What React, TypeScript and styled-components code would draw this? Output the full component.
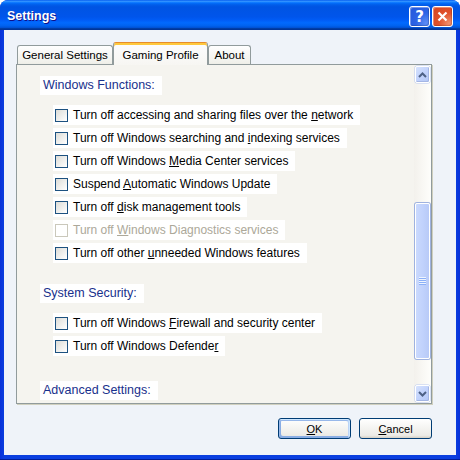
import styled, { createGlobalStyle } from "styled-components";

const GlobalStyle = createGlobalStyle`
  html, body {
    margin: 0;
    padding: 0;
    background: #ffffff;
  }
  body {
    width: 460px;
    height: 460px;
    overflow: hidden;
  }
`;

const Window = styled.div`
  width: 460px;
  height: 460px;
  display: flex;
  flex-direction: column;
  border-radius: 8px 8px 0 0;
  overflow: hidden;
  background: linear-gradient(90deg, #0831d9 0%, #0a3fe0 1%, #0a3fe0 99%, #0831d9 100%);
  box-shadow: inset 0 -1px #001e9a;
  font-family: "Liberation Sans", Arial, sans-serif;
`;

const TitleBar = styled.div`
  height: 30px;
  flex: none;
  display: flex;
  align-items: center;
  padding: 0 7px;
  background: linear-gradient(
    180deg,
    #0058ee 0%,
    #3593ff 4%,
    #288eff 6%,
    #127dff 8%,
    #036ffc 10%,
    #0262ee 14%,
    #0057e5 20%,
    #0054e3 24%,
    #0055eb 56%,
    #005bf5 66%,
    #026afe 76%,
    #0062ef 86%,
    #0052d6 92%,
    #0040ab 94%,
    #003092 100%
  );
`;

const Title = styled.div`
  flex: 1;
  color: #ffffff;
  font-weight: bold;
  font-size: 12.5px;
  text-shadow: 1px 1px #0f1089;
  padding-top: 1px;
`;

const Controls = styled.div`
  display: flex;
  gap: 2px;
  align-self: flex-end;
  margin-bottom: 3px;
`;

const CaptionButton = styled.div<{ $kind: "help" | "close" }>`
  width: 21px;
  height: 21px;
  box-sizing: border-box;
  border: 1px solid #ffffff;
  border-radius: 3px;
  display: flex;
  align-items: center;
  justify-content: center;
  color: #ffffff;
  font-family: "DejaVu Sans", sans-serif;
  font-weight: bold;
  font-size: 15px;
  background: ${(p) =>
    p.$kind === "help"
      ? "radial-gradient(circle at 85% 85%, #5d8df5 0%, #2c64e5 45%, #2457d9 100%)"
      : "radial-gradient(circle at 85% 85%, #f0906c 0%, #e0512b 45%, #d34522 100%)"};
  box-shadow: inset -1px -1px rgba(0, 0, 0, 0.15), inset 1px 1px rgba(255, 255, 255, 0.35);
`;

const Client = styled.div`
  flex: 1;
  margin: 0 4px 5px;
  background: #eff3f9;
  display: flex;
  flex-direction: column;
  padding: 12px 24px 0 12px;
`;

const TabRow = styled.div`
  height: 23px;
  display: flex;
  align-items: flex-end;
  margin: 0 0 -1px 1px;
  position: relative;
  z-index: 1;
`;

const Tab = styled.div<{ $active?: boolean; $width: number }>`
  width: ${(p) => p.$width}px;
  box-sizing: border-box;
  height: ${(p) => (p.$active ? 23 : 19)}px;
  margin-bottom: ${(p) => (p.$active ? 0 : 1)}px;
  border: 1px solid #919b9c;
  border-bottom: none;
  border-radius: 3px 3px 0 0;
  display: flex;
  align-items: center;
  justify-content: center;
  font-size: 11.5px;
  color: #000000;
  padding-top: ${(p) => (p.$active ? 1 : 0)}px;
  background: ${(p) =>
    p.$active
      ? "linear-gradient(180deg, #fcfcfe 0%, #f7f6f2 100%)"
      : "linear-gradient(180deg, #ffffff 0%, #fafaf9 26%, #f0f0ea 95%, #ecebe5 100%)"};
  ${(p) =>
    p.$active &&
    `
    border-top: 1px solid #e68b2c;
    box-shadow: inset 0 2px #ffc83c;
  `}
`;

const Panel = styled.div`
  height: 340px;
  box-sizing: border-box;
  border: 1px solid #919b9c;
  display: flex;
  background: #f5f4ef;
  box-shadow: 1px 1px #d0d0bf;
`;

const Content = styled.div`
  flex: 1;
  overflow: hidden;
  padding: 11px 0 0 23px;
  display: flex;
  flex-direction: column;
`;

const Section = styled.div<{ $spaceBefore: number }>`
  display: flex;
  flex-direction: column;
  flex: none;
  margin-top: ${(p) => p.$spaceBefore}px;
`;

const SectionTitle = styled.div`
  align-self: flex-start;
  height: 19px;
  line-height: 19px;
  padding: 0 7px 0 3px;
  background: #ffffff;
  color: #18308c;
  font-size: 12.5px;
`;

const Options = styled.div`
  display: flex;
  flex-direction: column;
  gap: 3px;
  margin: 10px 0 0 13px;
`;

const Option = styled.label<{ $disabled?: boolean }>`
  align-self: flex-start;
  height: 20px;
  display: flex;
  align-items: center;
  gap: 5px;
  padding: 0 7px 0 2px;
  background: #ffffff;
  font-size: 12px;
  color: ${(p) => (p.$disabled ? "#aca899" : "#000000")};
  white-space: nowrap;
`;

const Box = styled.span<{ $disabled?: boolean }>`
  width: 13px;
  height: 13px;
  box-sizing: border-box;
  flex: none;
  border: 1px solid ${(p) => (p.$disabled ? "#cac8bb" : "#1c5180")};
  background: ${(p) =>
    p.$disabled ? "#ffffff" : "linear-gradient(135deg, #dcdcd7 0%, #ffffff 100%)"};
`;

const Scrollbar = styled.div`
  width: 17px;
  flex: none;
  box-sizing: border-box;
  padding: 1px;
  display: flex;
  flex-direction: column;
  background: linear-gradient(90deg, #f3f1ec 0%, #fefefb 100%);
`;

const ArrowButton = styled.div`
  height: 17px;
  flex: none;
  box-sizing: border-box;
  border: 1px solid #ffffff;
  border-radius: 2px;
  display: flex;
  align-items: center;
  justify-content: center;
  background: linear-gradient(135deg, #d6e2fd 0%, #c2d3fc 50%, #b4c8f6 100%);
  box-shadow: inset -1px -1px #a4b6e4, 0 0 0 0.5px #b9c9ef;
`;

const Track = styled.div`
  flex: 1;
  display: flex;
  flex-direction: column;
`;

const Thumb = styled.div`
  margin-top: 120px;
  height: 156px;
  box-sizing: border-box;
  border: 1px solid #ffffff;
  border-radius: 2px;
  background: linear-gradient(90deg, #cad9fd 0%, #c1d2fc 50%, #b8caf7 100%);
  box-shadow: 0 0 0 1px #9fb2df;
  display: flex;
  align-items: center;
  justify-content: center;
`;

const Grip = styled.div`
  width: 7px;
  height: 8px;
  background: repeating-linear-gradient(180deg, #eef4fe 0 1px, #8cb0f8 1px 2px);
`;

const ButtonRow = styled.div`
  display: flex;
  justify-content: flex-end;
  gap: 8px;
  margin-top: 14px;
`;

const Button = styled.div<{ $default?: boolean }>`
  width: 73px;
  height: 21px;
  box-sizing: border-box;
  border: 1px solid #003c74;
  border-radius: 3px;
  display: flex;
  align-items: center;
  justify-content: center;
  font-size: 11px;
  color: #000000;
  background: linear-gradient(180deg, #ffffff 0%, #ecebe6 86%, #d6d0c5 100%);
  box-shadow: ${(p) =>
    p.$default
      ? "inset -1px 1px #cee7ff, inset 1px 2px #98b8ea, inset -2px 2px #bcd4f6, inset 1px -1px #89ade4, inset 2px -2px #89ade4"
      : "none"};
`;

function Accel({ label }: { label: string }) {
  const i = label.indexOf("&");
  if (i < 0) return <span>{label}</span>;
  return (
    <span>
      {label.slice(0, i)}
      <u>{label[i + 1]}</u>
      {label.slice(i + 2)}
    </span>
  );
}

interface Opt {
  label: string;
  disabled?: boolean;
}

const sections: { title: string; spaceBefore: number; options: Opt[] }[] = [
  {
    title: "Windows Functions:",
    spaceBefore: 0,
    options: [
      { label: "Turn off accessing and sharing files over the &network" },
      { label: "Turn off Windows searching and &indexing services" },
      { label: "Turn off Windows &Media Center services" },
      { label: "Suspend &Automatic Windows Update" },
      { label: "Turn off &disk management tools" },
      { label: "Turn off &Windows Diagnostics services", disabled: true },
      { label: "Turn off other &unneeded Windows features" },
    ],
  },
  {
    title: "System Security:",
    spaceBefore: 21,
    options: [
      { label: "Turn off Windows &Firewall and security center" },
      { label: "Turn off Windows Defende&r" },
    ],
  },
  { title: "Advanced Settings:", spaceBefore: 25, options: [] },
];

function Chevron({ up }: { up?: boolean }) {
  return (
    <svg width="9" height="6" viewBox="0 0 9 6">
      <polyline
        points={up ? "1,5 4.5,1.5 8,5" : "1,1 4.5,4.5 8,1"}
        fill="none"
        stroke="#4d6185"
        strokeWidth="2"
      />
    </svg>
  );
}

export default function App() {
  return (
    <>
      <GlobalStyle />
      <Window>
        <TitleBar>
          <Title>Settings</Title>
          <Controls>
            <CaptionButton $kind="help">?</CaptionButton>
            <CaptionButton $kind="close">
              <svg width="11" height="11" viewBox="0 0 11 11">
                <path d="M1.5 1.5 L9.5 9.5 M9.5 1.5 L1.5 9.5" stroke="#ffffff" strokeWidth="2.2" />
              </svg>
            </CaptionButton>
          </Controls>
        </TitleBar>
        <Client>
          <TabRow>
            <Tab $width={96}>General Settings</Tab>
            <Tab $width={95} $active>
              Gaming Profile
            </Tab>
            <Tab $width={43}>About</Tab>
          </TabRow>
          <Panel>
            <Content>
              {sections.map((s) => (
                <Section key={s.title} $spaceBefore={s.spaceBefore}>
                  <SectionTitle>{s.title}</SectionTitle>
                  {s.options.length > 0 && (
                    <Options>
                      {s.options.map((o) => (
                        <Option key={o.label} $disabled={o.disabled}>
                          <Box $disabled={o.disabled} />
                          <Accel label={o.label} />
                        </Option>
                      ))}
                    </Options>
                  )}
                </Section>
              ))}
            </Content>
            <Scrollbar>
              <ArrowButton>
                <Chevron up />
              </ArrowButton>
              <Track>
                <Thumb>
                  <Grip />
                </Thumb>
              </Track>
              <ArrowButton>
                <Chevron />
              </ArrowButton>
            </Scrollbar>
          </Panel>
          <ButtonRow>
            <Button $default>
              <Accel label="&OK" />
            </Button>
            <Button>
              <Accel label="&Cancel" />
            </Button>
          </ButtonRow>
        </Client>
      </Window>
    </>
  );
}
